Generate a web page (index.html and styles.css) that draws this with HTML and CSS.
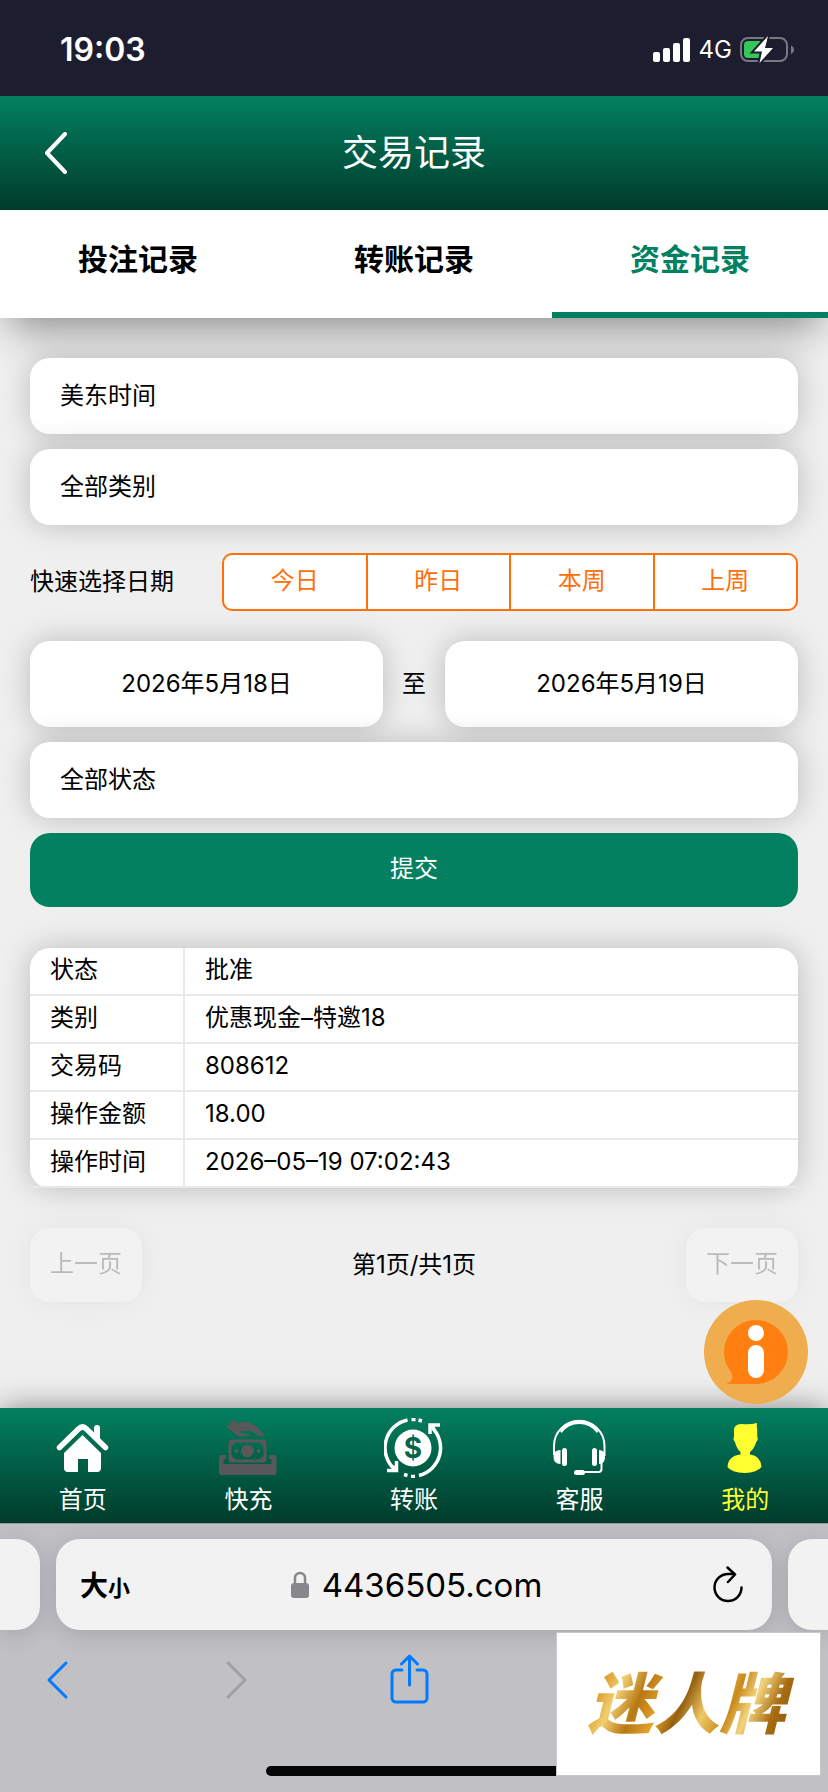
FILE: index.html
```html
<!DOCTYPE html>
<html lang="zh-CN">
<head>
    <meta charset="UTF-8">
    <meta name="viewport" content="width=device-width, initial-scale=1.0">
    <title>交易记录</title>
    <link rel="stylesheet" href="styles.css">
</head>
<body>
    <div class="status-bar">
        <span class="clock">19:03</span>
        <div class="status-icons">
            <svg width="38" height="24" viewBox="0 0 38 24" fill="#fff">
                <rect x="0" y="14" width="7" height="10" rx="2"/>
                <rect x="10" y="10" width="7" height="14" rx="2"/>
                <rect x="20" y="5" width="7" height="19" rx="2"/>
                <rect x="30" y="0" width="7" height="24" rx="2"/>
            </svg>
            <span class="network">4G</span>
            <svg width="54" height="28" viewBox="0 0 54 28">
                <rect x="1" y="2" width="46" height="23" rx="7" fill="none" stroke="#777882" stroke-width="2"/>
                <path d="M51 9.500c4 1.500 4 7 0 8.500z" fill="#777882"/>
                <path d="M8 5h12v17H8a4 4 0 0 1-4-4V9a4 4 0 0 1 4-4z" fill="#35c759"/>
                <path d="M28 0 14 15.500h8L19.500 27 33 12h-8z" fill="#fff" stroke="#1c1e2f" stroke-width="4" paint-order="stroke"/>
            </svg>
        </div>
    </div>

    <header class="header">
        <a class="back" href="#" aria-label="返回">
            <svg width="24" height="42" viewBox="0 0 24 42" fill="none" stroke="#fff" stroke-width="4" stroke-linecap="round" stroke-linejoin="round">
                <path d="M21 2 3 21l18 19"/>
            </svg>
        </a>
        <h1>交易记录</h1>
    </header>

    <nav class="tabs">
        <a href="#">投注记录</a>
        <a href="#">转账记录</a>
        <a href="#" class="active">资金记录</a>
    </nav>

    <main class="content">
        <form class="filter">
            <select class="field" aria-label="时区">
                <option>美东时间</option>
            </select>
            <select class="field" aria-label="类别">
                <option>全部类别</option>
            </select>

            <div class="quick">
                <span>快速选择日期</span>
                <div class="quick-group">
                    <button type="button">今日</button>
                    <button type="button">昨日</button>
                    <button type="button">本周</button>
                    <button type="button">上周</button>
                </div>
            </div>

            <div class="dates">
                <input class="field date" type="text" value="2026年5月18日" aria-label="开始日期">
                <span>至</span>
                <input class="field date" type="text" value="2026年5月19日" aria-label="结束日期">
            </div>

            <select class="field" aria-label="状态">
                <option>全部状态</option>
            </select>
            <button type="submit" class="submit">提交</button>
        </form>

        <table class="record">
            <tr><th scope="row">状态</th><td>批准</td></tr>
            <tr><th scope="row">类别</th><td>优惠现金–特邀18</td></tr>
            <tr><th scope="row">交易码</th><td>808612</td></tr>
            <tr><th scope="row">操作金额</th><td>18.00</td></tr>
            <tr><th scope="row">操作时间</th><td>2026–05–19 07:02:43</td></tr>
        </table>

        <div class="pager">
            <button type="button" disabled>上一页</button>
            <span>第1页/共1页</span>
            <button type="button" disabled>下一页</button>
        </div>

        <button type="button" class="info" aria-label="信息">
            <svg width="104" height="104" viewBox="0 0 104 104">
                <circle cx="52" cy="52" r="52" fill="#efad4d"/>
                <path d="M52 20a32 32 0 0 1 0 64H22c6-2 8-6 5-12A32 32 0 0 1 52 20z" fill="#ff7f11"/>
                <circle cx="52" cy="33" r="8" fill="#fff"/>
                <rect x="44" y="45" width="16" height="33" rx="8" fill="#fff"/>
            </svg>
        </button>
    </main>

    <!-- 底部导航 -->
    <nav class="bottom-nav">
        <a href="#">
            <svg width="60" height="60" viewBox="0 0 60 60" fill="#fff">
                <path d="M6.500 29.500 25.500 11q4-4 8 0l19 18.500" fill="none" stroke="#fff" stroke-width="5.500" stroke-linecap="round" stroke-linejoin="round"/>
                <path d="M41 18V10a3 3 0 0 1 6 0v13z"/>
                <path d="M29.500 17 48 35v15a4 4 0 0 1-4 4h-9V41H25v13H15a4 4 0 0 1-4-4V35z"/>
            </svg>
            <span>首页</span>
        </a>
        <a href="#">
            <svg width="60" height="60" viewBox="0 0 60 60" fill="#58585a">
                <path d="M8.600 8.700 14.600 2l5 3q6-2 11-.8l6 2.800 8 7.500q2 3-.5 3.500l-4-.7-7-4q-5-1-9.500-.3-3 1-.5 2l5 .5q4 1 4.500 2.200-1.500.8-4 .5H20z"/>
                <path d="M3 37h5v4H5.500v5h48v-5H51v-4h5.500a2 2 0 0 1 2 2v15.500a2.500 2.500 0 0 1-2.500 2.500H3.500A2.500 2.500 0 0 1 1 54.500V39a2 2 0 0 1 2-2z"/>
                <rect x="12" y="23" width="35" height="20" rx="2" fill="none" stroke="#58585a" stroke-width="3"/>
                <path d="M13 24h5l-5 5zM46 24h-5l5 5zM13 42h5l-5-5zM46 42h-5l5-5z"/>
                <circle cx="29.500" cy="33" r="6.300"/>
                <circle cx="18.600" cy="33" r="2"/>
                <circle cx="40.600" cy="33" r="2"/>
            </svg>
            <span>快充</span>
        </a>
        <a href="#">
            <svg width="60" height="60" viewBox="0 0 60 60" fill="none" stroke="#fff" stroke-width="3.500">
                <path d="M23.500 2A28.500 28.500 0 0 0 11 51.500M48 9.500A28.500 28.500 0 0 1 35 57.500"/>
                <path d="M3 52.500h9.500V43M46 16V7h10M12 52 8 48M46.500 7.500l4 4"/>
                <path d="M27.500 1.500h4M34.500 2l3.500 1M20 56.500l3.500 1M27 58.500h4"/>
                <circle cx="29" cy="30" r="18.500" fill="#fff" stroke="none"/>
                <text class="coin" x="29" y="40">$</text>
            </svg>
            <span>转账</span>
        </a>
        <a href="#">
            <svg width="60" height="60" viewBox="0 0 60 60" fill="#fff">
                <path d="M4 37v-9a25 25 0 0 1 50.500 0v10M51.500 42v9q0 3-3 3H33" fill="none" stroke="#fff" stroke-width="2"/>
                <path d="M10 13Q17 2 29.200 2T48.500 13l-1.500 2q-7-9-17.800-9T11.500 15z"/>
                <path d="M10.500 32q-7 0-7 7t7 7zM49 32q6 0 6 7t-6 7z"/>
                <rect x="12" y="30" width="5" height="18" rx="2.500"/>
                <rect x="42" y="30" width="5" height="18" rx="2.500"/>
                <rect x="24" y="52" width="11" height="5" rx="2.500"/>
            </svg>
            <span>客服</span>
        </a>
        <a href="#" class="active">
            <svg width="60" height="60" viewBox="0 0 60 60" fill="#ffff32">
                <path d="M19 11q1-5 8-5 8 .8 15-1-.5 4 .2 6v7.500q1.500 3-1 5.500-2 7-6.200 10v2.500Q46 38 46.500 49 42 54.500 30 55q-14-.5-17.500-6Q13 38 25.500 36.500V34q-4-3.500-5.500-10-2.500-2.500-1-5z"/>
            </svg>
            <span>我的</span>
        </a>
    </nav>

    <!-- 浏览器工具栏 -->
    <footer class="browser">
        <div class="address-row">
            <div class="side-tab left"></div>
            <div class="address">
                <button type="button" class="text-size" aria-label="文字大小">大<small>小</small></button>
                <div class="site">
                    <svg width="20" height="28" viewBox="0 0 20 28">
                        <path d="M5 13V7a5 5 0 0 1 10 0v6" fill="none" stroke="#87868b" stroke-width="2.500"/>
                        <rect x="1" y="12" width="18" height="15" rx="3" fill="#87868b"/>
                    </svg>
                    <span>4436505.com</span>
                </div>
                <button type="button" class="reload" aria-label="刷新">
                    <svg width="32" height="38" viewBox="0 0 32 38" fill="none" stroke="#000" stroke-width="2.500" stroke-linecap="round" stroke-linejoin="round">
                        <path d="M29.500 21.500A13.500 13.500 0 1 1 16 8h6"/>
                        <path d="M15.500 1.500 23 8.500l-7 7.500"/>
                    </svg>
                </button>
            </div>
            <div class="side-tab right"></div>
        </div>
        <div class="toolbar">
            <button type="button" aria-label="后退">
                <svg width="56" height="52" viewBox="0 0 56 52" fill="none" stroke="#007aff" stroke-width="3" stroke-linecap="round" stroke-linejoin="round">
                    <path d="M37 9 20 26l17 17"/>
                </svg>
            </button>
            <button type="button" aria-label="前进">
                <svg width="56" height="52" viewBox="0 0 56 52" fill="none" stroke="#a0a0a4" stroke-width="3" stroke-linecap="round" stroke-linejoin="round">
                    <path d="M23 9l17 17-17 17"/>
                </svg>
            </button>
            <button type="button" aria-label="分享">
                <svg width="56" height="52" viewBox="0 0 56 52" fill="none" stroke="#007aff" stroke-width="3" stroke-linecap="round" stroke-linejoin="round">
                    <path d="M21 16h-6a4 4 0 0 0-4 4v24a4 4 0 0 0 4 4h27a4 4 0 0 0 4-4V20a4 4 0 0 0-4-4h-6M28.500 31V2M20.500 10l8-8 8 8"/>
                </svg>
            </button>
        </div>
        <div class="home-indicator"></div>
        <div class="brand"><span>迷人牌</span></div>
    </footer>
</body>
</html>
```
FILE: styles.css
```css
* {
    box-sizing: border-box;
}
body {
    margin: 0;
    min-height: 100vh;
    display: flex;
    flex-direction: column;
    background: #efefef;
    color: #000;
    font-family: Inter, "Noto Sans CJK SC", sans-serif;
    font-size: 24px;
    line-height: 36px;
}
button, input, select {
    font: inherit;
    color: inherit;
    border: 0;
    margin: 0;
    padding: 0;
    background: none;
}
a {
    color: inherit;
    text-decoration: none;
}
svg {
    display: block;
}

/* status bar */
.status-bar {
    height: 96px;
    padding: 4px 34px 0 60px;
    display: flex;
    align-items: center;
    justify-content: space-between;
    background: #1c1e2f;
    color: #fff;
}
.clock {
    font-size: 32px;
    font-weight: 600;
}
.status-icons {
    display: flex;
    align-items: center;
    gap: 8px;
}

/* header */
.header {
    height: 114px;
    display: grid;
    grid-template-columns: 1fr auto 1fr;
    align-items: center;
    padding: 0 44px;
    background: linear-gradient(#038060, #003b2b);
    color: #fff;
}
.header h1 {
    margin: 0;
    font-size: 36px;
    font-weight: 400;
}
.tabs {
    display: flex;
    height: 108px;
    background: #fff;
    box-shadow: 0 20px 40px -10px rgba(0, 0, 0, 0.42);
    position: relative;
}
.tabs a {
    flex: 1;
    padding-top: 31px;
    text-align: center;
    font-size: 30px;
    font-weight: 600;
    border-bottom: 6px solid transparent;
}
.tabs .active {
    color: #038060;
    border-color: #038060;
}

/* filter form */
.content {
    flex: 1;
    position: relative;
    z-index: 1;
    padding: 40px 30px;
}
.filter {
    display: flex;
    flex-direction: column;
    gap: 15px;
    margin-bottom: 41px;
}
.field {
    width: 100%;
    height: 76px;
    padding: 0 30px;
    appearance: none;
    background: #fff;
    border-radius: 20px;
    box-shadow: 0 0 30px rgba(0, 0, 0, 0.22);
}
.quick {
    display: flex;
    align-items: center;
    justify-content: space-between;
    margin: 13px 0 15px;
}
.quick-group {
    display: flex;
    width: 75%;
    height: 58px;
    background: #fff;
    border: 2px solid #ff6f0a;
    border-radius: 10px;
    color: #ff6f0a;
}
.quick-group button {
    flex: 1;
    padding-bottom: 2px;
}
.quick-group button + button {
    border-left: 2px solid #ff6f0a;
}
.dates {
    display: flex;
    align-items: center;
    gap: 19px;
}
.date {
    flex: 1;
    min-width: 0;
    height: 86px;
    padding-bottom: 6px;
    text-align: center;
}
.submit {
    height: 74px;
    padding-bottom: 2px;
    background: #038060;
    border-radius: 20px;
    color: #fff;
    position: relative;
}

/* record */
.record {
    width: 100%;
    border-spacing: 0;
    background: #fff;
    border-radius: 20px;
    box-shadow: 0 0 30px rgba(0, 0, 0, 0.22);
}
.record th, .record td {
    height: 48px;
    padding: 0 20px 2px;
    text-align: left;
    font-weight: 400;
    border-bottom: 2px solid #e8e8e8;
}
.record th {
    width: 155px;
    border-right: 2px solid #e8e8e8;
}
.pager {
    display: flex;
    align-items: center;
    justify-content: space-between;
    margin-top: 40px;
}
.pager button {
    height: 74px;
    padding: 0 20px 2px;
    background: #fff;
    border-radius: 20px;
    box-shadow: 0 0 30px rgba(0, 0, 0, 0.22);
    opacity: 0.22;
}
.info {
    position: absolute;
    right: 20px;
    bottom: 4px;
}

/* bottom nav */
.bottom-nav {
    display: flex;
    height: 115px;
    background: linear-gradient(#038060, #003b2b);
    box-shadow: 0 0 30px -2px rgba(0, 0, 0, 0.5);
    color: #fff;
}
.bottom-nav a {
    flex: 1;
    display: flex;
    flex-direction: column;
    align-items: center;
    gap: 4px;
    padding-top: 10px;
}
.bottom-nav .active {
    color: #ffff32;
}
.coin {
    fill: #02664d;
    stroke: none;
    font-size: 28px;
    font-weight: 700;
    text-anchor: middle;
}

/* browser chrome */
.browser {
    position: relative;
    height: 269px;
    padding-top: 15px;
    border-top: 1px solid #98989c;
    background: #c0c0c5;
    overflow: hidden;
}
.address-row {
    display: flex;
    gap: 16px;
}
.address, .side-tab {
    height: 91px;
    background: #f2f2f2;
    border-radius: 24px;
    box-shadow: 0 4px 24px rgba(0, 0, 0, 0.14);
}
.side-tab {
    width: 40px;
}
.side-tab.left {
    border-radius: 0 24px 24px 0;
}
.side-tab.right {
    border-radius: 24px 0 0 24px;
}
.address {
    flex: 1;
    display: grid;
    grid-template-columns: 1fr auto 1fr;
    align-items: center;
    padding: 0 28px 0 24px;
}
.text-size {
    justify-self: start;
    padding-top: 4px;
    font-size: 28px;
    font-weight: 600;
}
.text-size small {
    font-size: 22px;
}
.site {
    display: flex;
    align-items: center;
    gap: 12px;
    padding-left: 8px;
    font-size: 33px;
}
.reload {
    justify-self: end;
}
.toolbar {
    display: flex;
    gap: 120px;
    padding: 24px 29px;
}
.home-indicator {
    position: absolute;
    bottom: 16px;
    left: 50%;
    width: 296px;
    height: 10px;
    margin-left: -148px;
    border-radius: 5px;
    background: #050505;
}
/* logo card over the toolbar */
.brand {
    position: absolute;
    right: 7px;
    bottom: 16px;
    width: 265px;
    height: 144px;
    display: flex;
    align-items: center;
    justify-content: center;
    padding-right: 4px;
    background: #fff;
    border: 1px solid #c8c8c8;
}
.brand span {
    padding: 0 8px;
    font-size: 66px;
    font-weight: 900;
    font-style: italic;
    line-height: 80px;
    color: transparent;
    background: linear-gradient(115deg, #a86a10 0%, #d99a25 12%, #f2cf72 20%, #b87813 30%, #e3a42e 40%, #94600f 48%, #f0c866 58%, #c98a1c 68%, #f3d57f 76%, #a86c12 86%, #80520c 100%);
    -webkit-background-clip: text;
    background-clip: text;
}
```
